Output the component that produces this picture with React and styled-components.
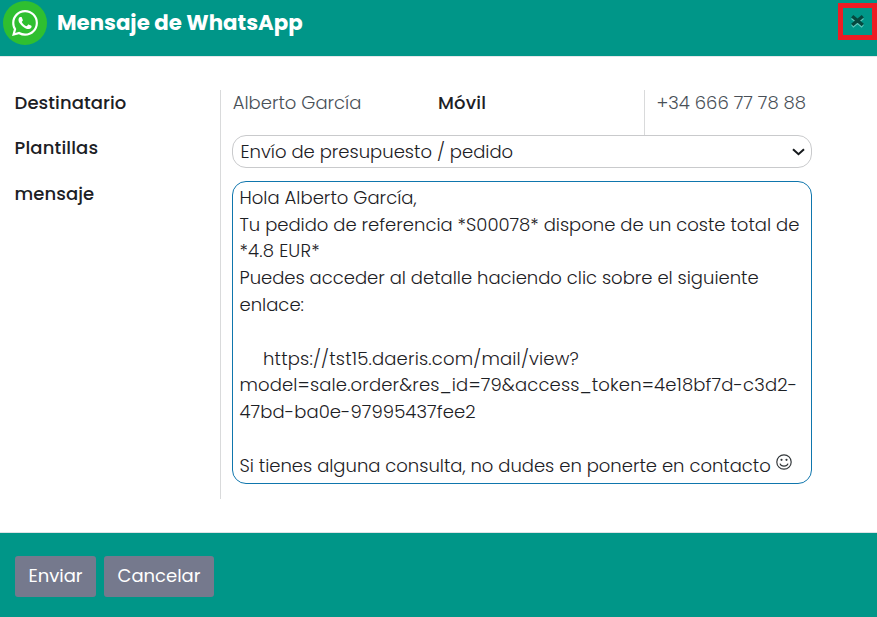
import React from "react";
import styled, { createGlobalStyle } from "styled-components";

const GlobalStyle = createGlobalStyle`
  * { box-sizing: border-box; }
  body {
    margin: 0;
    background: #fff;
    color: #1c2024;
    font-family: Poppins, Inter, "Noto Sans", sans-serif;
    font-size: 18px;
    font-weight: 300;
  }
`;

const Dialog = styled.div`
  display: flex;
  flex-direction: column;
  height: 617px;
  overflow: hidden;
`;

const Header = styled.header`
  display: flex;
  align-items: flex-start;
  height: 57px;
  padding: 1px 0 0 3px;
  background: #009688;
  border-bottom: 1px solid #e4e8ea;
`;

const Title = styled.h1`
  flex: 1;
  margin: 5px 0 0 10px;
  font-size: 21.3px;
  line-height: 33px;
  font-weight: 700;
  color: #fff;
`;

const CloseButton = styled.button`
  display: flex;
  align-items: center;
  justify-content: center;
  width: 39px;
  height: 37px;
  margin-top: 2px;
  padding: 0 1px 1px 0;
  background: transparent;
  border: 5px solid #ed1c24;
`;

const Body = styled.main`
  height: 475px;
  padding: 33px 65px 0 0;
`;

const Form = styled.div`
  display: grid;
  grid-template-columns: 220px 592px;
  height: 409px;
`;

const Labels = styled.div`
  display: flex;
  flex-direction: column;
  padding-left: 14.6px;
`;

const Label = styled.label`
  height: ${(p) => p.$h || 45}px;
  line-height: 26px;
  font-weight: 500;
  letter-spacing: ${(p) => p.$ls || 0}px;
`;

const Fields = styled.div`
  display: flex;
  flex-direction: column;
  padding-left: 11px;
  border-left: 1px solid #d9dadb;
`;

const ContactRow = styled.div`
  display: grid;
  grid-template-columns: 206px 206px 1fr;
  height: 45px;
`;

const Value = styled.span`
  padding-left: ${(p) => (p.$divided ? 11.5 : 0.7)}px;
  border-left: ${(p) => (p.$divided ? "1px solid #d9dadb" : "0")};
  line-height: 26px;
  color: #495057;
  white-space: nowrap;
`;

const Select = styled.div`
  display: flex;
  align-items: center;
  justify-content: space-between;
  height: 33px;
  padding: 0 6px 0 7.5px;
  border: 1px solid #c9cacc;
  border-radius: 14px;
`;

const Message = styled.div`
  height: 303px;
  margin-top: 13px;
  padding: 2.8px 0 0 6.5px;
  border: 1px solid #0f76ad;
  border-radius: 14px;
`;

const Line = styled.div`
  display: flex;
  height: 26.8px;
  padding-left: ${(p) => p.$indent || 0}px;
  line-height: 26.8px;
  letter-spacing: ${(p) => p.$ls || 0}px;
  white-space: pre;
`;

const Smile = styled.svg`
  margin: 1.4px 0 0 5.5px;
`;

const Footer = styled.footer`
  display: flex;
  gap: 8px;
  height: 85px;
  padding: 23px 15px 0;
  background: #009688;
  border-top: 1px solid #dee2e6;
`;

const Button = styled.button`
  width: ${(p) => p.$w}px;
  height: 41px;
  padding: 0 0 2px;
  border: 0;
  border-radius: 3px;
  background: #75798d;
  color: #fff;
  font: inherit;
  font-weight: 400;
`;

const lines = [
  { text: "Hola Alberto García,", ls: 0.02 },
  { text: "Tu pedido de referencia *S00078* dispone de un coste total de", ls: -0.01 },
  { text: "*4.8 EUR*", ls: 0.15 },
  { text: "Puedes acceder al detalle haciendo clic sobre el siguiente", ls: -0.015 },
  { text: "enlace:" },
  { text: "" },
  { text: "https://tst15.daeris.com/mail/view?", ls: 0.18, indent: 23.5 },
  { text: "model=sale.order&res_id=79&access_token=4e18bf7d-c3d2-", ls: 0.14 },
  { text: "47bd-ba0e-97995437fee2", ls: 0.08 },
  { text: "" },
  { text: "Si tienes alguna consulta, no dudes en ponerte en contacto", ls: -0.015, smile: true },
];

function WhatsAppLogo() {
  return (
    <svg width="44" height="44" viewBox="0 0 44 44">
      <circle cx="22" cy="22" r="22" fill="#2fbf30" />
      <g transform="translate(9 9) scale(1.083)">
        <path
          fill="#fff"
          d="M17.472 14.382c-.297-.149-1.758-.867-2.03-.967-.273-.099-.471-.148-.67.15-.197.297-.767.966-.94 1.164-.173.199-.347.223-.644.075-.297-.15-1.255-.463-2.39-1.475-.883-.788-1.48-1.761-1.653-2.059-.173-.297-.018-.458.13-.606.134-.133.298-.347.446-.52.149-.174.198-.298.298-.497.099-.198.05-.371-.025-.52-.075-.149-.669-1.612-.916-2.207-.242-.579-.487-.5-.669-.51-.173-.008-.371-.01-.57-.01-.198 0-.52.074-.792.372-.272.297-1.04 1.016-1.04 2.479 0 1.462 1.065 2.875 1.213 3.074.149.198 2.096 3.2 5.077 4.487.709.306 1.262.489 1.694.625.712.227 1.36.195 1.871.118.571-.085 1.758-.719 2.006-1.413.248-.694.248-1.289.173-1.413-.074-.124-.272-.198-.57-.347m-5.421 7.403h-.004a9.87 9.87 0 01-5.031-1.378l-.361-.214-3.741.982.998-3.648-.235-.374a9.86 9.86 0 01-1.51-5.26c.001-5.45 4.436-9.884 9.888-9.884 2.64 0 5.122 1.03 6.988 2.898a9.825 9.825 0 012.893 6.994c-.003 5.45-4.437 9.884-9.885 9.884m8.413-18.297A11.815 11.815 0 0012.05 0C5.495 0 .16 5.335.157 11.892c0 2.096.547 4.142 1.588 5.945L.057 24l6.305-1.654a11.882 11.882 0 005.683 1.448h.005c6.554 0 11.89-5.335 11.893-11.893a11.821 11.821 0 00-3.48-8.413z"
        />
      </g>
    </svg>
  );
}

function CloseIcon() {
  return (
    <svg width="15" height="16" viewBox="0 0 15 16" fill="none" strokeWidth="3.4">
      <path d="M2.2 4.6 L12.8 13.4 M12.8 4.6 L2.2 13.4" stroke="#5fc9bc" />
      <path d="M2.2 3.2 L12.8 12 M12.8 3.2 L2.2 12" stroke="#06483f" />
    </svg>
  );
}

export default function App() {
  return (
    <Dialog>
      <GlobalStyle />
      <Header>
        <WhatsAppLogo />
        <Title>Mensaje de WhatsApp</Title>
        <CloseButton aria-label="Cerrar">
          <CloseIcon />
        </CloseButton>
      </Header>
      <Body>
        <Form>
          <Labels>
            <Label $ls={0.08}>Destinatario</Label>
            <Label $ls={0.15} $h={46}>Plantillas</Label>
            <Label $ls={0.05}>mensaje</Label>
          </Labels>
          <Fields>
            <ContactRow>
              <Value>Alberto García</Value>
              <Label $ls={0.2}>Móvil</Label>
              <Value $divided>+34 666 77 78 88</Value>
            </ContactRow>
            <Select>
              Envío de presupuesto / pedido
              <svg width="13" height="8" viewBox="0 0 13 8" fill="none">
                <path d="M1 1.2 L6.5 6.2 L12 1.2" stroke="#15191c" strokeWidth="2" />
              </svg>
            </Select>
            <Message>
              {lines.map((l, i) => (
                <Line key={i} $ls={l.ls} $indent={l.indent}>
                  {l.text}
                  {l.smile && (
                    <Smile width="16" height="16" viewBox="0 0 16 16" fill="none" stroke="#33383b" strokeWidth="1.2">
                      <circle cx="8" cy="8" r="7.2" />
                      <path d="M4 9.6 C5 13 11 13 12 9.6" />
                      <circle cx="5.5" cy="5.8" r="1.1" fill="#33383b" stroke="none" />
                      <circle cx="10.5" cy="5.8" r="1.1" fill="#33383b" stroke="none" />
                    </Smile>
                  )}
                </Line>
              ))}
            </Message>
          </Fields>
        </Form>
      </Body>
      <Footer>
        <Button $w={81}>Enviar</Button>
        <Button $w={110}>Cancelar</Button>
      </Footer>
    </Dialog>
  );
}
